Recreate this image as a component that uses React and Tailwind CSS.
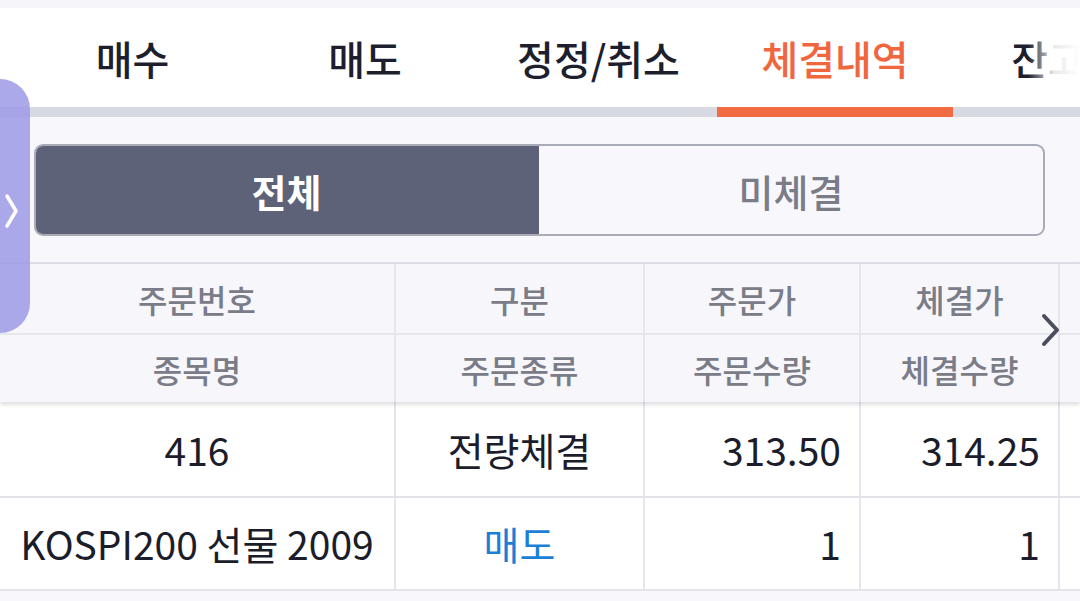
import React from "react";

const font = { fontFamily: '"Noto Sans CJK KR", "Noto Sans", sans-serif' };

const tabs = [
  { label: "매수", w: "w-[235px]" },
  { label: "매도", w: "w-[230px]" },
  { label: "정정/취소", w: "w-[237px]" },
  { label: "체결내역", w: "w-[236px]", active: true },
  { label: "잔고", w: "w-[190px]" },
];

const cols = "grid grid-cols-[394px_249px_216px_199px_1fr]";

const HeaderRow = ({ cells, top }) => (
  <div className={`${cols} h-[69px] ${top ? "" : "border-t-2 border-[#e6e7ee]"}`}>
    {cells.map((c, i) => (
      <div
        key={i}
        className={`flex items-center justify-center text-[32px] font-medium text-[#7a7c88] ${
          i > 0 ? "border-l-2 border-[#e6e7ee]" : ""
        }`}
      >
        {c}
      </div>
    ))}
  </div>
);

const DataRow = ({ cells, h }) => (
  <div className={`${cols} ${h} border-b-2 border-[#e3e4ea] bg-white`}>
    {cells.map((c, i) => (
      <div
        key={i}
        className={`flex items-center whitespace-nowrap text-[39px] ${c.color || "text-[#1c1d2b]"} ${
          c.right ? "justify-end pr-[18px]" : "justify-center"
        } ${i > 0 ? "border-l-2 border-[#e6e7ee]" : ""}`}
      >
        {c.text}
      </div>
    ))}
  </div>
);

export default function App() {
  return (
    <div className="relative w-[1080px] h-[601px] overflow-hidden bg-[#f8f8fc]" style={font}>
      <div className="h-[8px] bg-[#f6f6fa]" />

      {/* tabs */}
      <div className="relative bg-white">
        <div className="flex h-[99px] pl-[15px] items-center">
          {tabs.map((t) => (
            <div
              key={t.label}
              className={`${t.w} shrink-0 text-center text-[40px] font-medium ${
                t.active ? "text-[#f0673f]" : "text-[#1e1f2e]"
              }`}
            >
              {t.label}
            </div>
          ))}
        </div>
        <div className="absolute right-0 top-0 h-[99px] w-[52px] bg-gradient-to-r from-white/0 via-white/90 to-white" />
        <div className="h-[10px] bg-[#d8dae3] pl-[717px]">
          <div className="h-full w-[236px] bg-[#f26b43]" />
        </div>
      </div>

      {/* segment */}
      <div className="pl-[34px] pr-[35px] pt-[27px] pb-[26px]">
        <div className="flex h-[92px] rounded-[9px] overflow-hidden border-2 border-[#a9abb7]">
          <div className="flex-[506] bg-[#5d6279] flex items-center justify-center text-white text-[38px] font-bold -m-[2px] mr-0 rounded-l-[9px]">
            전체
          </div>
          <div className="flex-[505] flex items-center justify-center text-[#7a7c88] text-[38px] font-medium">
            미체결
          </div>
        </div>
      </div>

      {/* table */}
      <div className="border-t-2 border-[#dcdde5]">
        <div className="relative z-10 bg-[#f6f6fb] shadow-[0_3px_4px_rgba(0,0,0,0.12)]">
          <HeaderRow top cells={["주문번호", "구분", "주문가", "체결가", ""]} />
          <HeaderRow cells={["종목명", "주문종류", "주문수량", "체결수량", ""]} />
        </div>
        <DataRow
          h="h-[96px]"
          cells={[
            { text: "416" },
            { text: "전량체결" },
            { text: "313.50", right: true },
            { text: "314.25", right: true },
            { text: "" },
          ]}
        />
        <DataRow
          h="h-[93px]"
          cells={[
            { text: "KOSPI200 선물 2009" },
            { text: "매도", color: "text-[#1b7fd8]" },
            { text: "1", right: true },
            { text: "1", right: true },
            { text: "" },
          ]}
        />
      </div>

      {/* right chevron */}
      <svg className="absolute left-[1040px] top-[313px] z-20" width="22" height="34" viewBox="0 0 22 34">
        <path d="M4 3 L17 17 L4 31" fill="none" stroke="#4b4d5c" strokeWidth="4" strokeLinecap="round" strokeLinejoin="round" />
      </svg>

      {/* left handle */}
      <div className="absolute left-0 top-[79px] z-30 w-[30px] h-[254px] rounded-r-[30px] bg-[#9e9ae6]/85 flex items-center">
        <svg className="ml-[3px] mt-[10px]" width="18" height="40" viewBox="0 0 18 40">
          <path d="M4 5 L13 20 L4 35" fill="none" stroke="white" strokeWidth="3.5" strokeLinecap="round" strokeLinejoin="round" />
        </svg>
      </div>
    </div>
  );
}
